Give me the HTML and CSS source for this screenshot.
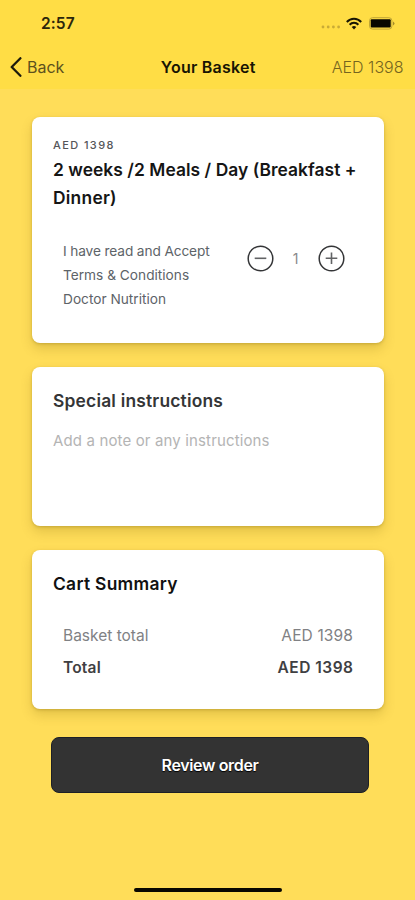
FILE: index.html
```html
<!DOCTYPE html>
<html lang="en">
<head>
<meta charset="utf-8">
<meta name="viewport" content="width=device-width, initial-scale=1">
<title>Your Basket</title>
<link rel="stylesheet" href="styles.css">
</head>
<body>
<div class="screen">
  <div class="top">
    <div class="status">
      <span class="time">2:57</span>
      <div class="indicators">
        <svg class="dots" width="20" height="4" viewBox="0 0 20 4"><g fill="#c9ab36"><circle cx="2" cy="2" r="1.4"/><circle cx="7.2" cy="2" r="1.4"/><circle cx="12.4" cy="2" r="1.4"/><circle cx="17.6" cy="2" r="1.4"/></g></svg>
        <svg class="wifi" width="16" height="13" viewBox="0 0 16 13"><g fill="none" stroke="#181604" stroke-width="2"><path d="M.8 5C4.8.7 11.2.7 15.2 5"/><path d="M3.6 7.8C6.1 5.2 9.9 5.2 12.4 7.8"/></g><path d="M5.7 9.9Q8 7.9 10.3 9.9L8 12.4Z" fill="#181604"/></svg>
        <svg class="battery" width="26" height="13" viewBox="0 0 26 13"><rect x=".5" y=".7" width="22.4" height="11.4" rx="3" fill="none" stroke="#c0a636"/><rect x="1.7" y="2.2" width="20" height="8.4" rx="1" fill="#080700"/><path d="M24 4.4Q27 6.4 24 8.4Z" fill="#a48c29"/></svg>
      </div>
    </div>
    <nav class="nav">
      <a class="back"><svg width="12" height="20" viewBox="0 0 12 20"><path d="M10.4 1.2 1.7 10l8.7 8.8" fill="none" stroke="#1d1b0c" stroke-width="2.3" stroke-linecap="round" stroke-linejoin="round"/></svg><span class="back-label">Back</span></a>
      <h1 class="title">Your Basket</h1>
      <span class="nav-price">AED 1398</span>
    </nav>
  </div>
  <main class="content">
    <section class="card item">
      <div class="item-price">AED 1398</div>
      <h2 class="item-name"><span class="line-one">2 weeks /2 Meals / Day (Breakfast +</span> <span class="line-two">Dinner)</span></h2>
      <div class="item-row">
        <div class="terms"><span class="accept">I have read and Accept</span><br>Terms &amp; Conditions<br>Doctor Nutrition</div>
        <div class="stepper">
          <svg width="27" height="27" viewBox="0 0 27 27" fill="none"><circle cx="13.5" cy="13.5" r="12.3" stroke="#343537" stroke-width="1.5"/><path d="M7.7 13.3h11.6" stroke="#626365" stroke-width="1.6"/></svg>
          <span class="quantity">1</span>
          <svg width="27" height="27" viewBox="0 0 27 27" fill="none"><circle cx="13.5" cy="13.5" r="12.3" stroke="#343537" stroke-width="1.5"/><path d="M7.7 13.3h11.6M13.5 7.5v11.6" stroke="#626365" stroke-width="1.6"/></svg>
        </div>
      </div>
    </section>
    <section class="card notes">
      <h2 class="heading notes-title">Special instructions</h2>
      <div class="note">Add a note or any instructions</div>
    </section>
    <section class="card summary">
      <h2 class="heading summary-title">Cart Summary</h2>
      <div class="row"><span>Basket total</span><span class="amount">AED 1398</span></div>
      <div class="row total"><span class="total-label">Total</span><span class="amount-total">AED 1398</span></div>
    </section>
    <button class="review">Review order</button>
  </main>
  <div class="home"></div>
</div>
</body>
</html>
```
FILE: styles.css
```css
* { box-sizing: border-box; }
body { margin: 0; background: #ffdd59; font-family: Inter, "Liberation Sans", sans-serif; }
h1, h2 { margin: 0; font-weight: 600; }
svg { display: block; flex: none; }
.screen { width: 415px; height: 900px; display: flex; flex-direction: column; background: #ffdd59; overflow: hidden; white-space: nowrap; }
.top { height: 89px; flex: none; background: #ffdd45; }
.status { height: 45px; padding: 1px 20.5px 0 41px; display: flex; justify-content: space-between; align-items: center; }
.time { font-size: 15.5px; font-weight: 600; color: #2b260b; letter-spacing: .1px; }
.indicators { display: flex; align-items: center; }
.dots { margin: 8px 5px 0 0; }
.wifi { margin-right: 7px; }
.nav { height: 44px; padding: 0 11.5px 0 10px; display: grid; grid-template-columns: 1fr auto 1fr; align-items: center; }
.back { display: flex; align-items: center; gap: 5px; }
.back-label { font-size: 16px; color: #5d511d; }
.title { margin: 0 -1.5px 0 1.5px; font-size: 16px; letter-spacing: .25px; color: #171403; }
.nav-price { justify-self: end; font-size: 16px; font-weight: 300; color: #75651f; }
.content { display: flex; flex-direction: column; padding: 28px 32px 0; }
.card { width: 351.5px; margin-bottom: 24px; padding: 0 21px; border-radius: 8px; background: #fff; box-shadow: 0 6px 12px rgba(115, 90, 0, .2), 0 1px 3px rgba(115, 90, 0, .28); }
.item { height: 226px; padding-top: 20px; }
.item-price { font-size: 11px; line-height: 16px; font-weight: 500; letter-spacing: 1.4px; color: #555659; }
.item-name { margin-top: 3px; font-size: 17.4px; line-height: 28px; color: #151515; white-space: normal; }
.line-one { display: block; white-space: nowrap; letter-spacing: .05px; }
.line-two { letter-spacing: .25px; }
.item-row { display: flex; justify-content: space-between; padding: 27px 18px 0 10px; }
.terms { font-size: 13.7px; line-height: 24px; color: #5d6368; }
.accept { letter-spacing: -.12px; }
.stepper { display: flex; align-items: center; height: 27px; gap: 18px; margin-top: 6px; }
.quantity { width: 8px; text-align: center; font-size: 14px; color: #88898b; }
.notes { height: 159px; padding-top: 22px; }
.heading { font-size: 17.4px; line-height: 24px; color: #111; }
.notes-title { letter-spacing: .2px; color: #343536; }
.summary-title { letter-spacing: .3px; }
.note { margin-top: 16px; font-size: 15px; line-height: 24px; letter-spacing: .14px; color: #b4b4b4; }
.summary { height: 159px; padding-top: 22px; }
.row { display: flex; justify-content: space-between; padding: 0 9.5px 0 10px; line-height: 32px; font-size: 15.5px; color: #808184; }
.heading + .row { margin-top: 24px; }
.amount { letter-spacing: .13px; }
.total { font-weight: 600; color: #3f4042; }
.total-label { letter-spacing: .2px; }
.amount-total { letter-spacing: .5px; margin-right: -.5px; }
.review { width: 318px; height: 56px; margin: 4px 0 0 19px; padding: 0; border: 1px solid #1d2025; border-radius: 8px; background: #333; color: #fff; font: 600 16px Inter, "Liberation Sans", sans-serif; letter-spacing: -.35px; text-shadow: 0 1px 1px #000; }
.home { width: 148px; height: 4px; margin: auto 0 8px 134px; border-radius: 2px; background: #090700; }
```
